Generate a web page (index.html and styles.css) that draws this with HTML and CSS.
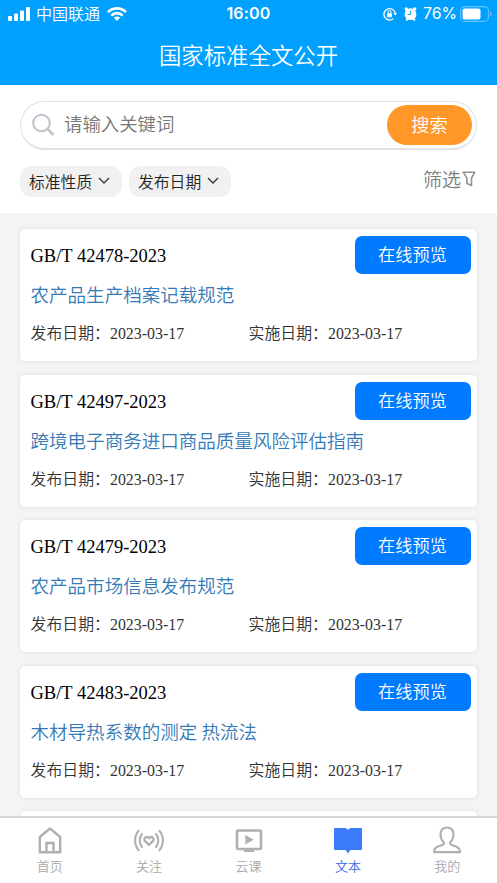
FILE: index.html
```html
<!DOCTYPE html>
<html lang="zh-CN">
<head>
<meta charset="utf-8">
<title>国家标准全文公开</title>
<link rel="stylesheet" href="styles.css">
</head>
<body>
<div class="app">
  <header class="header">
    <div class="status">
      <div class="status-left">
        <svg class="signal" width="22" height="14" viewBox="0 0 22 14" fill="#fff"><rect x="0" y="9" width="4" height="5" rx="1"/><rect x="6" y="6.500" width="4" height="7.500" rx="1"/><rect x="12" y="3.500" width="4" height="10.500" rx="1"/><rect x="18" y="0" width="4" height="14" rx="1"/></svg>
        <span class="carrier">中国联通</span>
        <svg class="wifi" width="20" height="14" viewBox="0 0 20 14" fill="none" stroke="#fff" stroke-width="2.700"><path d="M1 5.100a12.600 12.600 0 0 1 18 0M4.300 8.600a8 8 0 0 1 11.400 0"/><path d="M6.900 10.800a4.400 4.400 0 0 1 6.200 0L10 14z" fill="#fff" stroke="none"/></svg>
      </div>
      <span class="time">16:00</span>
      <div class="status-right">
        <svg class="lock" width="14" height="14" viewBox="0 0 14 14" fill="none" stroke="#fff" stroke-width="1.300"><path d="M10.300 11.700A5.700 5.700 0 1 1 12.200 6"/><path d="M10.300 6h3.700l-1.800 2.600z" fill="#fff" stroke="none"/><rect x="4" y="6.200" width="5" height="4" rx=".5" fill="#fff" stroke="none"/><path d="M5.100 6.500V5a1.400 1.400 0 0 1 2.800 0v1.500" stroke-width="1"/></svg>
        <svg class="alarm" width="13" height="14" viewBox="0 0 13 14"><g fill="#fff"><circle cx="6.500" cy="7.200" r="5.900"/><circle cx="2.300" cy="2" r="1.700"/><circle cx="10.700" cy="2" r="1.700"/><path d="M1.300 13.200l2-3 2 1.500-2 2zM11.700 13.200l-2-3-2 1.500 2 2z"/></g><path d="M6.700 3.700v3.800H3.500" fill="none" stroke="#00a0ff" stroke-width="1"/></svg>
        <span class="percent">76%</span>
        <svg class="battery" width="32" height="16" viewBox="0 0 32 16"><rect x=".6" y=".6" width="27.800" height="14.800" rx="4" fill="none" stroke="#62c3ff" stroke-width="1.100"/><rect x="2.500" y="2.500" width="18" height="11" rx="2" fill="#fff"/><path d="M30 5.500c2 .8 2 4.200 0 5z" fill="#62c3ff"/></svg>
      </div>
    </div>
    <h1 class="title">国家标准全文公开</h1>
  </header>

  <section class="search-panel">
    <div class="search-box">
      <svg class="search-icon" width="23" height="24" viewBox="0 0 23 24" fill="none" stroke="#bec2cb" stroke-width="2"><circle cx="9.500" cy="10" r="8.300"/><path d="M15.500 16l6 6" stroke-width="2.500"/></svg>
      <span class="placeholder">请输入关键词</span>
      <button class="search-button">搜索</button>
    </div>
    <div class="filters">
      <div class="chip">标准性质<svg width="12" height="8" viewBox="0 0 12 8" fill="none" stroke="#333" stroke-width="1.300"><path d="M1 1l5 5 5-5"/></svg></div>
      <div class="chip">发布日期<svg width="12" height="8" viewBox="0 0 12 8" fill="none" stroke="#333" stroke-width="1.300"><path d="M1 1l5 5 5-5"/></svg></div>
      <div class="filter-link">筛选<svg width="14" height="16" viewBox="0 0 14 16" fill="none" stroke="#929292" stroke-width="1.600" stroke-linejoin="round"><path d="M1.200 1.200h11.600L9.500 7.200v7.200L4.900 12.500V7.200z"/></svg></div>
    </div>
  </section>

  <main class="list">
    <article class="card">
      <div class="card-top"><span class="code">GB/T 42478-2023</span><button class="preview">在线预览</button></div>
      <div class="name">农产品生产档案记载规范</div>
      <div class="dates"><span>发布日期：2023-03-17</span><span>实施日期：2023-03-17</span></div>
    </article>
    <article class="card">
      <div class="card-top"><span class="code">GB/T 42497-2023</span><button class="preview">在线预览</button></div>
      <div class="name">跨境电子商务进口商品质量风险评估指南</div>
      <div class="dates"><span>发布日期：2023-03-17</span><span>实施日期：2023-03-17</span></div>
    </article>
    <article class="card">
      <div class="card-top"><span class="code">GB/T 42479-2023</span><button class="preview">在线预览</button></div>
      <div class="name">农产品市场信息发布规范</div>
      <div class="dates"><span>发布日期：2023-03-17</span><span>实施日期：2023-03-17</span></div>
    </article>
    <article class="card">
      <div class="card-top"><span class="code">GB/T 42483-2023</span><button class="preview">在线预览</button></div>
      <div class="name">木材导热系数的测定 热流法</div>
      <div class="dates"><span>发布日期：2023-03-17</span><span>实施日期：2023-03-17</span></div>
    </article>
    <article class="card"></article>
  </main>

  <nav class="tabs">
    <div class="tab">
      <svg width="30" height="30" viewBox="0 0 30 30" fill="none" stroke="#b0b0b0" stroke-width="2.400" stroke-linejoin="round"><path d="M4.800 11L15 2.500 25.200 11v15.200H4.800z"/><path d="M11.500 26v-9h7v9" stroke-linejoin="miter"/></svg>
      <span>首页</span>
    </div>
    <div class="tab">
      <svg width="30" height="30" viewBox="0 0 30 30" fill="none" stroke="#b0b0b0" stroke-width="2.300" stroke-linecap="round" stroke-linejoin="round"><path d="M15 18.800l-3.900-3.600c-2.300-2.800 1.300-5.800 3.900-3 2.600-2.800 6.200.2 3.900 3z"/><path d="M8 8c-3 3.500-3 9.500 0 13M4.600 4.800c-4.600 5.200-4.600 14.200 0 19.400M22 8c3 3.500 3 9.500 0 13M25.400 4.800c4.600 5.200 4.600 14.200 0 19.400" stroke-width="2.100"/></svg>
      <span>关注</span>
    </div>
    <div class="tab">
      <svg width="30" height="30" viewBox="0 0 30 30"><rect x="3" y="4.500" width="24" height="18.500" rx="1" fill="none" stroke="#b0b0b0" stroke-width="2.600"/><path d="M11.300 9v9.400l8.500-4.700zM9.800 23h10.400v3H9.800z" fill="#b0b0b0"/></svg>
      <span>云课</span>
    </div>
    <div class="tab active">
      <svg width="30" height="30" viewBox="0 0 30 30" fill="#3c7cfa"><path d="M2 2h9.500c1.700 0 2.900.7 3.500 2 .6-1.300 1.800-2 3.500-2H28a1 1 0 0 1 1 1v20a1 1 0 0 1-1 1h-9.500c-1.500 0-2.500 1.500-3.500 4-1-2.500-2-4-3.500-4H2a1 1 0 0 1-1-1V3a1 1 0 0 1 1-1z"/></svg>
      <span>文本</span>
    </div>
    <div class="tab">
      <svg width="30" height="30" viewBox="0 0 30 30" fill="none" stroke="#b0b0b0" stroke-width="2.200" stroke-linejoin="round"><path d="M15 1.500c-4.400 0-6.700 3-6.500 7.200.2 3.300 1.400 5.800 3 7.300.8.900.4 2.300-.8 2.800l-5.200 2c-2.300.9-3.500 2.500-3.500 5.400h26c0-2.900-1.200-4.500-3.500-5.400l-5.200-2c-1.200-.5-1.600-1.900-.8-2.800 1.600-1.500 2.800-4 3-7.300C21.700 4.500 19.400 1.500 15 1.500z"/></svg>
      <span>我的</span>
    </div>
  </nav>
</div>
</body>
</html>
```
FILE: styles.css
```css
* { box-sizing: border-box; }
body { margin: 0; font-family: "Liberation Sans", "Noto Sans CJK SC", sans-serif; }
svg { display: block; flex: none; }
button { border: 0; padding: 0; font-family: inherit; color: #fff; }
.app { width: 497px; height: 883px; display: flex; flex-direction: column; overflow: hidden; background: #fff; }

.header { flex: none; height: 85px; background: #00a0ff; color: #fff; }
.status { height: 27px; display: grid; grid-template-columns: 1fr auto 1fr; align-items: center; padding: 0 6px 0 8px; }
.status-left, .status-right { display: flex; align-items: center; }
.status-right { justify-content: flex-end; }
.carrier { margin: 0 7px 0 6px; font: 350 16px/24px "Noto Sans CJK SC", sans-serif; padding-bottom: 2px; }
.time { font: 600 16px/27px Inter, sans-serif; letter-spacing: .2px; margin-left: -2px; }
.lock { margin-right: 7px; }
.alarm { margin-right: 6px; }
.percent { font: 400 15.8px/27px Inter, sans-serif; margin-right: 3px; }
.battery { margin-right: -1px; }
.title { margin: 0; font: 350 22.4px/55px "Noto Sans CJK SC", sans-serif; text-align: center; }

.search-panel { flex: none; height: 128px; padding: 16px 20px 0; }
.search-box { height: 49px; display: flex; align-items: center; padding: 0 4px 0 11px; border: 1px solid #e2e2e4; border-bottom-width: 2px; border-radius: 25px; }
.placeholder { flex: 1; margin-left: 9px; font: 350 18.4px/44px "Noto Sans CJK SC", sans-serif; color: #777; padding-bottom: 4px; }
.search-button { width: 85px; height: 40px; border-radius: 20px; background: #ff9829; font: 350 18.2px/38px "Noto Sans CJK SC", sans-serif; padding-bottom: 2px; }
.filters { display: flex; align-items: flex-start; gap: 7px; margin-top: 16px; }
.chip { width: 102px; height: 31px; display: flex; align-items: center; gap: 6px; padding: 0 0 1px 9px; border-radius: 12px; background: #f1f1f2; font: 350 15.8px/29px "Noto Sans CJK SC", sans-serif; color: #222; }
.filter-link { margin-left: auto; display: flex; align-items: center; gap: 1px; margin-right: 1px; font: 350 19px/25px "Noto Sans CJK SC", sans-serif; color: #808080; }

.list { flex: 1; min-height: 0; overflow: hidden; display: flex; flex-direction: column; gap: 13.6px; padding: 16px 20px 0; background: #f4f4f4; }
.card { flex: none; height: 132px; padding: 7px 6.5px 0 10.5px; border-radius: 5px; background: #fff; box-shadow: 0 0 4px rgba(0, 0, 0, .1); }
.card-top { display: flex; justify-content: space-between; align-items: flex-start; }
.code { font: 18.5px/40px "Liberation Serif", serif; color: #000; }
.preview { width: 116px; height: 38px; border-radius: 7px; background: #007bff; font: 350 17.2px/36px "Noto Sans CJK SC", sans-serif; padding-bottom: 2px; }
.name { margin-top: 3px; font: 350 18.54px/30px "Noto Sans CJK SC", sans-serif; color: #337ab7; white-space: nowrap; }
.dates { display: flex; margin-top: 13px; font: 350 15.9px/24px "Liberation Serif", "Noto Sans CJK SC", serif; color: #333; }
.dates span { width: 218px; white-space: nowrap; }

.tabs { flex: none; height: 67px; display: flex; border-top: 2px solid #d8d8d8; background: #fff; }
.tab { flex: 1; display: flex; flex-direction: column; align-items: center; padding-top: 8px; font: 350 13px/18px "Noto Sans CJK SC", sans-serif; color: #a8a8a8; }
.tab span { margin-top: 1px; }
.active { color: #3467e8; }
```
